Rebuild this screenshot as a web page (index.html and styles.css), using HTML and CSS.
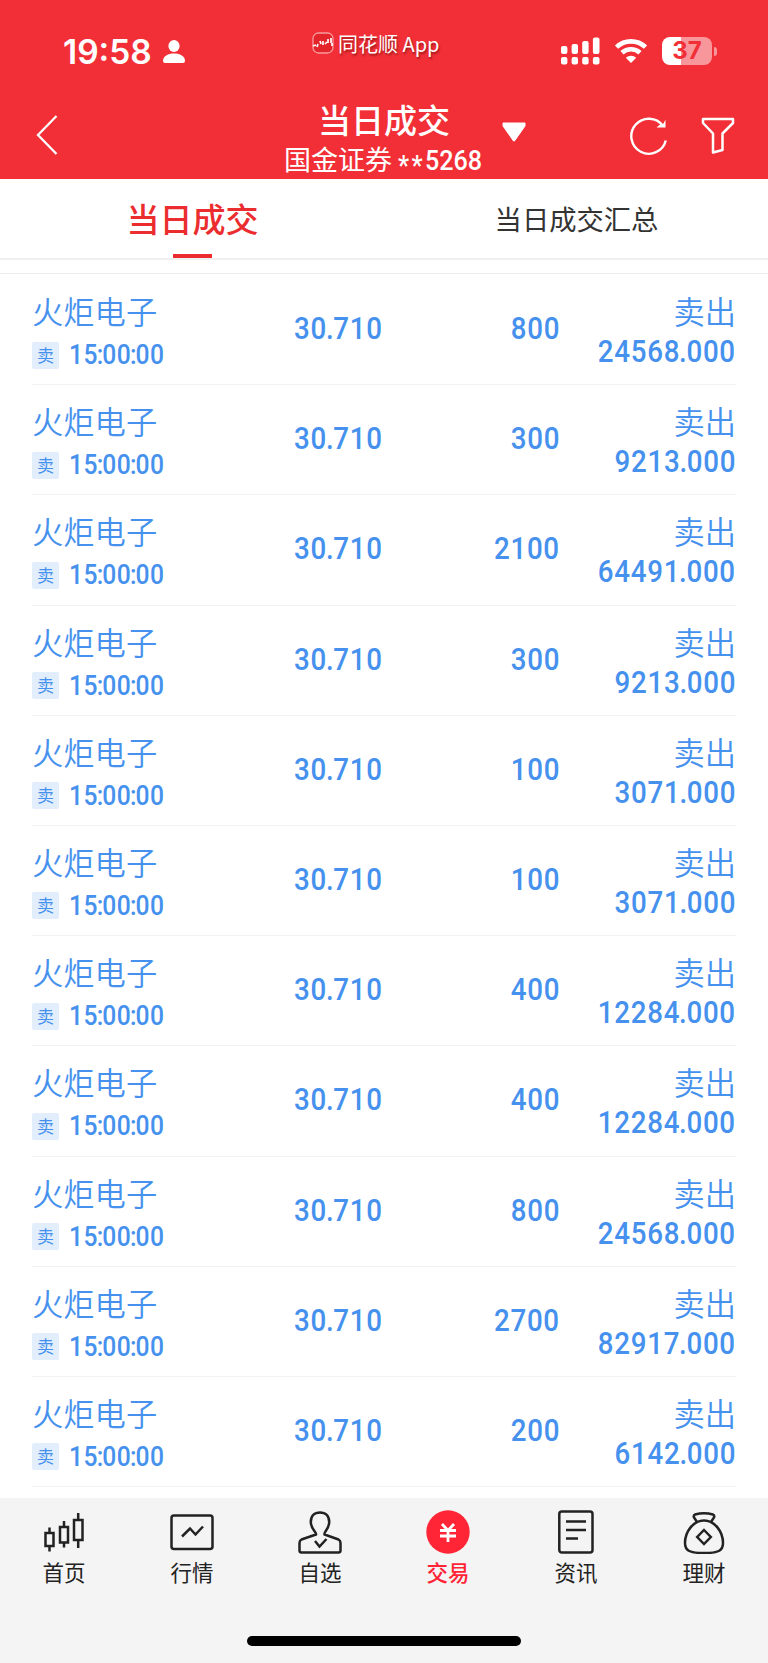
FILE: index.html
```html
<!DOCTYPE html>
<html lang="zh-CN">
<head>
    <meta charset="UTF-8">
    <meta name="viewport" content="width=device-width, initial-scale=1.0">
    <title>当日成交</title>
    <link rel="stylesheet" href="styles.css">
</head>
<body>
    <header class="header">
        <!-- 状态栏 -->
        <div class="status-bar">
            <div class="status-left">
                <span class="clock">19:58</span>
                <svg width="22" height="24" viewBox="0 0 22 24" fill="#fff"><ellipse cx="11" cy="6" rx="5.6" ry="6"/><path d="M0 21C0 16 5 13.5 11 13.5S22 16 22 21Q22 23 20 23H2Q0 23 0 21Z"/></svg>
            </div>
            <div class="app-mark">
                <svg width="22" height="22" viewBox="0 0 22 22"><rect x="1" y="1" width="20" height="20" rx="5.5" fill="#e3242b" stroke="#f99a9d" stroke-width="1.3"/><path d="M1 14l3-1M5 15l1-3M8 9l1 3M11 9v4M13 12l2-2M16 7v4M19 6v5M20 11v3" fill="none" stroke="#fff" stroke-width="1.7"/></svg>
                <span>同花顺 App</span>
            </div>
            <div class="status-right">
                <svg width="39" height="28" viewBox="0 0 39 28" fill="#fff">
                    <rect x="0" y="9" width="6.4" height="8" rx="2"/><rect x="10.6" y="7" width="6.4" height="10" rx="2"/><rect x="21.2" y="4" width="6.4" height="13" rx="2"/><rect x="31.9" y="0.5" width="6.6" height="16.5" rx="2"/>
                    <rect x="0" y="20" width="6.4" height="7.5" rx="2"/><rect x="10.6" y="20" width="6.4" height="7.5" rx="2"/><rect x="21.2" y="20" width="6.4" height="7.5" rx="2"/><rect x="31.9" y="20" width="6.6" height="7.5" rx="2"/>
                </svg>
                <svg class="wifi" width="34" height="26" viewBox="0 0 34 26"><path d="M2.5 9.2A21 21 0 0 1 31.5 9.2M8 14.8A13.2 13.2 0 0 1 26 14.8" fill="none" stroke="#fff" stroke-width="4.6"/><path d="M17 25l-5.2-5.2a7.6 7.6 0 0 1 10.4 0z" fill="#fff"/></svg>
                <div class="battery"><span>37</span></div>
                <i class="battery-tip"></i>
            </div>
        </div>

        <!-- 标题栏 -->
        <div class="nav-bar">
            <svg class="back" width="22" height="42" viewBox="0 0 22 42"><path d="M20.5 2L2 21l18.500 19" fill="none" stroke="#fff" stroke-width="2.3"/></svg>
            <div class="title-box">
                <h1>当日成交</h1>
                <p>国金证券 <span class="acct"><span class="stars">**</span>5268</span></p>
            </div>
            <svg class="arrow" width="24" height="20" viewBox="0 0 24 20"><path d="M1 1H23V4L12.500 19H11.500L1 4Z" fill="#fff" stroke="#fff" stroke-linejoin="round"/></svg>
            <svg class="refresh" width="38" height="40" viewBox="0 0 38 40"><path d="M35.800 24.500A17.500 17.500 0 1 1 33 10" fill="none" stroke="#fff" stroke-width="2.4"/><path d="M35.500 3.500v8h-9l3-2.500 4-1.500z" fill="#fff"/></svg>
            <svg class="filter" width="34" height="38" viewBox="0 0 34 38"><path d="M2 2H32V6L21.500 16.500V33L12 35.500V16.500L2 6Z" fill="none" stroke="#fff" stroke-width="2.5" stroke-linejoin="round"/></svg>
        </div>
    </header>

    <div class="tabs">
        <div class="tab active"><span>当日成交</span></div>
        <div class="tab"><span>当日成交汇总</span></div>
    </div>

    <div class="deal-list"></div>

    <!-- 底部导航 -->
    <footer class="footer">
        <div class="menu">
            <div class="menu-item">
                <svg width="44" height="44" viewBox="0 0 44 44"><path d="M3.500 23h8v13h-8zM18 17h8v15.500h-8zM32 10h8.500v20H32zM7.500 17.500V23M7.500 36v5.500M22 11v6M22 32.500v5M36.200 3v7M36.200 30v8"/></svg>
                <span>首页</span>
            </div>
            <div class="menu-item">
                <svg width="44" height="44" viewBox="0 0 44 44"><rect x="1.500" y="5.500" width="41" height="33.500" rx="2.500"/><path d="M12 26.500l8-8 5.500 6 7.500-8"/></svg>
                <span>行情</span>
            </div>
            <div class="menu-item">
                <svg width="44" height="44" viewBox="0 0 44 44"><path d="M18 24.500C18.500 22 12.800 19 12.800 12C12.800 6 16.500 2.500 22 2.500S31.200 6 31.200 12C31.200 19 25.500 22 26.500 24.500L40.500 29.500Q42.500 30.500 42.500 33V40.500Q42.500 42.500 40.500 42.500H3.500Q1.500 42.500 1.500 40.500V33Q1.500 30.500 3.500 29.500Z"/><path d="M17 31l4.500 5.500 7-7.500"/></svg>
                <span>自选</span>
            </div>
            <div class="menu-item current">
                <svg width="44" height="44" viewBox="0 0 44 44"><circle cx="22" cy="22" r="21.700"/><path d="M16 14l6 6.500 6-6.500M14 20.500h16M14 26h16M22 20.500v11.500"/></svg>
                <span>交易</span>
            </div>
            <div class="menu-item">
                <svg width="44" height="44" viewBox="0 0 44 44"><rect x="5.300" y="1.500" width="33.200" height="41" rx="2.500"/><path d="M12 11.500h20M12 20h20M12 28.500h12"/></svg>
                <span>资讯</span>
            </div>
            <div class="menu-item">
                <svg width="44" height="44" viewBox="0 0 44 44"><path d="M15 12L12 7.500Q11.200 5.500 13 4.500Q22 2 31 4.500Q32.800 5.500 32 7.500L29 12"/><path d="M22 10.500C11 10.500 3 22 3 33C3 41 8 43 22 43S41 41 41 33C41 22 33 10.500 22 10.500Z"/><path d="M22 20l6.800 7L22 34l-6.800-7z"/></svg>
                <span>理财</span>
            </div>
        </div>
        <div class="home-bar"></div>
    </footer>

    <script>
        // 成交记录 [价格, 数量, 金额]
        const deals = [
            ['30.710', '800', '24568.000'],
            ['30.710', '300', '9213.000'],
            ['30.710', '2100', '64491.000'],
            ['30.710', '300', '9213.000'],
            ['30.710', '100', '3071.000'],
            ['30.710', '100', '3071.000'],
            ['30.710', '400', '12284.000'],
            ['30.710', '400', '12284.000'],
            ['30.710', '800', '24568.000'],
            ['30.710', '2700', '82917.000'],
            ['30.710', '200', '6142.000']
        ];

        // 小数点和冒号收窄
        const tight = s => s.replace(/[.:]/g, '<i>$&</i>');

        document.querySelector('.deal-list').innerHTML = deals.map(([price, count, amount]) => `
            <div class="deal">
                <div class="stock">
                    <div class="name">火炬电子</div>
                    <div class="time-line"><span class="badge">卖</span><span class="num time">${tight('15:00:00')}</span></div>
                </div>
                <div class="price"><span class="num">${tight(price)}</span></div>
                <div class="count"><span class="num">${count}</span></div>
                <div class="amount">
                    <div class="name">卖出</div>
                    <span class="num">${tight(amount)}</span>
                </div>
            </div>`).join('');
    </script>
</body>
</html>
```
FILE: styles.css
```css
:root {
    --red: #f22f37;
    --blue: #4691ee;
}

* {
    box-sizing: border-box;
}

body {
    margin: 0;
    width: 768px;
    height: 1663px;
    overflow: hidden;
    display: flex;
    flex-direction: column;
    background: #fff;
    font-family: "Noto Sans CJK SC", sans-serif;
    color: #333;
}

svg {
    display: block;
    flex: none;
}

.header {
    height: 179px;
    flex: none;
    background: var(--red);
    color: #fff;
}

.status-bar {
    height: 96px;
    display: flex;
    padding: 0 51px 0 63px;
}

.status-left {
    display: flex;
    align-items: center;
    gap: 11px;
    width: 249px;
    padding-top: 7px;
}

.clock {
    font: 600 33.500px/40px Inter, sans-serif;
    width: 89px;
    white-space: nowrap;
}

.app-mark {
    display: flex;
    align-items: center;
    gap: 4px;
    height: 86px;
    width: 130px;
    font-size: 20px;
    white-space: nowrap;
    text-shadow: 1px 2px 2px rgba(80, 0, 0, 0.5);
}

.status-right {
    display: flex;
    align-items: center;
    justify-content: flex-end;
    width: 210px;
    margin-left: auto;
    padding-top: 6px;
}

.wifi {
    margin: 0 14px;
}

.battery {
    width: 50px;
    height: 28px;
    border-radius: 8px;
    background: linear-gradient(to right, #fff 19px, #f8979b 19px);
    color: var(--red);
    font: 700 24px/28px Inter, sans-serif;
    text-align: center;
}

.battery-tip {
    width: 3px;
    height: 9px;
    margin-left: 2px;
    border-radius: 0 4px 4px 0;
    background: #f8979b;
}

.nav-bar {
    height: 83px;
    display: flex;
    align-items: flex-start;
    padding-left: 36px;
}

.back {
    margin-top: 18px;
}

.title-box {
    width: 214px;
    margin-left: 219px;
    text-align: center;
    white-space: nowrap;
}

.title-box h1 {
    margin: 3px 0 0;
    font-size: 33px;
    line-height: 40px;
    font-weight: 500;
}

.title-box p {
    margin: 1px 0 0;
    font-size: 27px;
    line-height: 38px;
}

.acct {
    display: inline-block;
    width: 86px;
    font: 500 27px/30px Roboto, sans-serif;
    transform: scaleX(0.93);
    transform-origin: left;
}

.stars {
    display: inline-block;
    letter-spacing: 2.500px;
    transform: translateY(5px);
}

.arrow {
    margin: 26px 0 0 11px;
}

.refresh {
    margin: 20px 0 0 104px;
}

.filter {
    margin: 21px 0 0 33px;
}

.tabs {
    display: flex;
    flex: none;
    height: 81px;
    border-bottom: 2px solid #f0f0f0;
}

.tab {
    flex: 1;
    display: flex;
    flex-direction: column;
    align-items: center;
    font-size: 27.300px;
    line-height: 78px;
}

.tab span {
    height: 75px;
    margin-left: 1px;
}

.tab.active {
    color: #eb2d2f;
    font-size: 33px;
    font-weight: 500;
}

.tab.active::after {
    content: "";
    width: 39px;
    height: 4px;
    background: #eb2d2f;
}

/* 成交列表 */
.deal-list {
    flex: none;
    height: 1238px;
    margin-top: 13px;
    padding: 1px 32px 0;
    border-top: 1px solid #ededed;
    color: var(--blue);
}

.deal {
    height: 110.200px;
    display: grid;
    grid-template-columns: 180px 171px 177px 176px;
    border-bottom: 1px solid #f2f2f2;
}

.stock {
    padding-top: 16px;
}

.name {
    font-size: 31.300px;
    line-height: 40px;
    font-weight: 350;
}

.time-line {
    display: flex;
    align-items: center;
    gap: 10px;
    height: 40px;
    margin-top: 4px;
}

.badge {
    width: 27px;
    height: 27px;
    border-radius: 2px;
    background: #e2eefc;
    font-size: 17px;
    line-height: 26px;
    text-align: center;
}

/* 窄体数字 */
.num {
    display: inline-block;
    font: 500 31.500px/36px Roboto, sans-serif;
    letter-spacing: 0.800px;
    transform: scaleX(0.88);
    transform-origin: right;
}

.num i {
    font-style: normal;
    margin: 0 -1.200px;
}

.num.time {
    font-size: 28px;
    letter-spacing: 0.600px;
    transform-origin: left;
}

.num.time i {
    margin: 0 -1.600px;
}

.price,
.count,
.amount {
    text-align: right;
}

.price,
.count {
    padding-top: 36px;
}

.amount {
    padding: 16px 0 0;
}

.amount .num {
    margin-top: 3px;
}

/* 底部 */
.footer {
    flex: 1;
    margin-top: -13px;
    background: #f4f4f4;
}

.menu {
    display: flex;
    padding-top: 12px;
}

.menu-item {
    flex: 1;
    display: flex;
    flex-direction: column;
    align-items: center;
    font-size: 21.500px;
    line-height: 30px;
    color: #222;
}

.menu-item span {
    margin-top: 3px;
}

.menu-item svg {
    fill: none;
    stroke: #222;
    stroke-width: 2.500;
}

.menu-item.current {
    color: #ff2436;
    font-weight: 500;
}

.menu-item.current circle {
    fill: #ff2436;
    stroke: none;
}

.menu-item.current path {
    stroke: #fff;
    stroke-width: 2.800;
}

.home-bar {
    width: 274px;
    height: 10px;
    margin: 49px auto 0;
    border-radius: 5px;
    background: #000;
}
```
